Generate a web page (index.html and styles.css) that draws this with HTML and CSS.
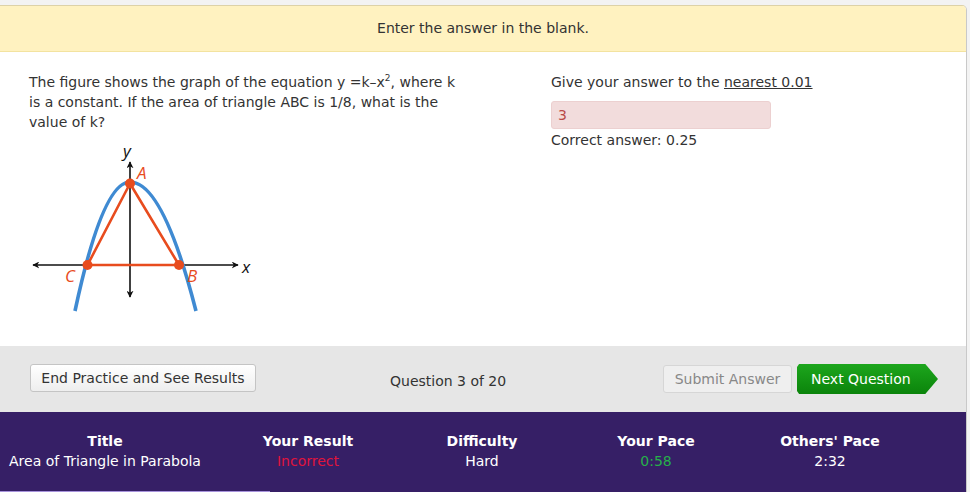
FILE: index.html
```html
<!DOCTYPE html>
<html>
<head>
<meta charset="utf-8">
<link rel="stylesheet" href="styles.css">
</head>
<body>
<div class="frame">
  <div class="banner">Enter the answer in the blank.</div>
  <div class="content">
    <div class="left">
      <p class="question">The figure shows the graph of the equation y =k–x<sup>2</sup>, where k is a constant. If the area of triangle ABC is 1/8, what is the value of k?</p>
      <svg class="figure" width="240" height="175" viewBox="20 140 240 175">
        <defs>
          <marker id="ar" viewBox="0 0 10 10" refX="9" refY="5" markerWidth="7" markerHeight="7" orient="auto-start-reverse" markerUnits="userSpaceOnUse">
            <path d="M0 0 L10 5 L0 10 L3 5 Z" fill="#111"/>
          </marker>
        </defs>
        <line x1="33" y1="266" x2="238" y2="266" stroke="#111" stroke-width="1.6" marker-start="url(#ar)" marker-end="url(#ar)"/>
        <line x1="130" y1="163" x2="130" y2="298" stroke="#111" stroke-width="1.6" marker-start="url(#ar)" marker-end="url(#ar)"/>
        <path d="M75 312 Q102.5 183 130 183 Q163 183 196 312" fill="none" stroke="#3f8ad2" stroke-width="3.6"/>
        <path d="M87.5 266 L130 184.5 L179 266 Z" fill="none" stroke="#e84c1e" stroke-width="2.6" stroke-linejoin="round"/>
        <circle cx="130" cy="184.5" r="5" fill="#e84c1e"/>
        <circle cx="87.5" cy="266" r="5" fill="#e84c1e"/>
        <circle cx="179" cy="266" r="5" fill="#e84c1e"/>
        <text x="123" y="158" class="lbl axis">y</text>
        <text x="137" y="180" class="lbl pt">A</text>
        <text x="65" y="283" class="lbl pt">C</text>
        <text x="187" y="283" class="lbl pt">B</text>
        <text x="242" y="274" class="lbl axis">x</text>
      </svg>
    </div>
    <div class="right">
      <p class="prompt">Give your answer to the <span class="u">nearest 0.01</span></p>
      <div class="answer">3</div>
      <p class="correct">Correct answer: 0.25</p>
    </div>
  </div>
  <div class="controls">
    <button class="btn end">End Practice and See Results</button>
    <div class="counter">Question 3 of 20</div>
    <div class="actions">
      <button class="btn submit">Submit Answer</button>
      <button class="next">Next Question</button>
    </div>
  </div>
  <div class="stats">
    <div class="col"><div class="h">Title</div><div class="v">Area of Triangle in Parabola</div></div>
    <div class="col"><div class="h">Your Result</div><div class="v bad">Incorrect</div></div>
    <div class="col"><div class="h">Difficulty</div><div class="v">Hard</div></div>
    <div class="col"><div class="h">Your Pace</div><div class="v good">0:58</div></div>
    <div class="col"><div class="h">Others' Pace</div><div class="v">2:32</div></div>
  </div>
  <div class="progress"><div class="fill"></div></div>
</div>
</body>
</html>
```

FILE: styles.css
```css
* { box-sizing: border-box; }
html, body { margin: 0; padding: 0; }
body {
  background: #f3f3f3;
  font-family: "DejaVu Sans", Verdana, sans-serif;
  font-size: 14px;
  color: #333;
}
.frame {
  margin-top: 5px;
  width: 967px;
  border-top: 1px solid #ddd2a8;
  border-right: 1px solid #c9c9c9;
  border-top-right-radius: 5px;
  overflow: hidden;
  background: #fff;
}
.banner {
  height: 46px;
  background: #fff2c0;
  border-bottom: 1px solid #f3e3a0;
  text-align: center;
  line-height: 45px;
  color: #333;
}
.content {
  display: flex;
  height: 294px;
  background: #fff;
}
.left { width: 551px; flex: none; padding: 20px 0 0 29px; }
.question { margin: 0; line-height: 20px; width: 440px; }
.question sup { font-size: 9px; line-height: 0; vertical-align: 6px; }
.figure { display: block; margin: 7px 0 0 -9px; }
.lbl { font-family: "Open Sans", "DejaVu Sans", sans-serif; font-style: italic; font-size: 17px; }
.lbl.pt { fill: #e84c1e; }
.lbl.axis { fill: #111; }
.right { padding: 20px 0 0 0; }
.prompt { margin: 0; line-height: 20px; }
.u { text-decoration: underline; }
.answer {
  margin-top: 9px;
  width: 220px;
  height: 28px;
  background: #f2dcdc;
  border: 1px solid #ecd0d0;
  border-radius: 3px;
  color: #b94a48;
  padding-left: 6px;
  line-height: 27px;
}
.correct { margin: 1px 0 0; line-height: 20px; }
.controls {
  height: 66px;
  background: #e6e6e6;
  display: flex;
  align-items: center;
  padding: 0 0 0 30px;
}
.btn {
  font-family: inherit;
  font-size: 14px;
  height: 28px;
  border-radius: 3px;
  padding: 0 8px;
}
.end {
  width: 226px;
  background: linear-gradient(#ffffff, #eeeeee);
  border: 1px solid #c4c4c4;
  color: #333;
  margin-top: -2px;
}
.counter { margin-left: 134px; width: 140px; margin-top: 3px; }
.actions { display: flex; margin-left: 133px; align-items: center; }
.submit {
  width: 129px;
  background: #efefef;
  border: 1px solid #d6d6d6;
  color: #888;
}
.next {
  margin-left: 5px;
  width: 141px;
  height: 30px;
  border: none;
  font-family: inherit;
  font-size: 14px;
  color: #fff;
  text-align: left;
  padding-left: 14px;
  background: linear-gradient(#1da61d, #0b840b);
  clip-path: polygon(0 10%, 1.5% 0, 91% 0, 100% 50%, 91% 100%, 1.5% 100%, 0 90%);
}
.stats {
  height: 79px;
  background: #361f66;
  display: grid;
  grid-template-columns: 210px 196px 152px 196px 152px;
  align-content: center;
  color: #fff;
  padding-bottom: 2px;
}
.col { text-align: center; line-height: 20px; }
.h { font-weight: bold; }
.bad { color: #e0143c; }
.good { color: #26b04a; }
.progress { height: 2px; background: #361f66; }
.fill { width: 270px; height: 2px; background: #a793dc; }
```
